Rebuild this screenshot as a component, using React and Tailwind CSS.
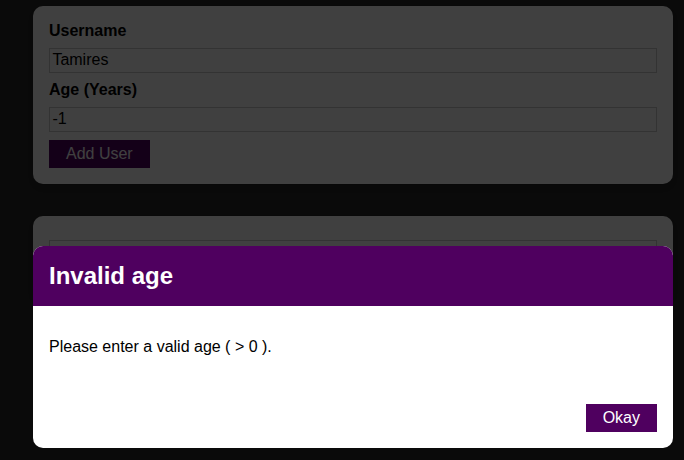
import { useState } from "react";

export default function App() {
  const [name, setName] = useState("Tamires");
  const [age, setAge] = useState("-1");
  const [error, setError] = useState({
    title: "Invalid age",
    message: "Please enter a valid age ( > 0 ).",
  });

  return (
    <div className="relative h-[460px] overflow-hidden bg-[#282828] font-['Liberation_Sans',Arial,sans-serif] text-base text-black">
      {/* add user form */}
      <div className="ml-[33px] mt-[6px] w-[640px] rounded-[10px] bg-white p-4 shadow-md">
        <label className="mb-2 block font-bold leading-[18px]">Username</label>
        <input
          className="mb-2 block w-full border border-[#ccc] p-[0.15rem] leading-[18px] outline-none"
          value={name}
          onChange={(e) => setName(e.target.value)}
        />
        <label className="mb-2 block font-bold leading-[18px]">Age (Years)</label>
        <input
          className="mb-2 block w-full border border-[#ccc] p-[0.15rem] leading-[18px] outline-none"
          value={age}
          onChange={(e) => setAge(e.target.value)}
        />
        <button className="border border-[#4f005f] bg-[#4f005f] px-4 py-1 leading-[18px] text-white">
          Add User
        </button>
      </div>

      {/* users list (covered by the modal) */}
      <div className="ml-[33px] mt-8 w-[640px] rounded-[10px] bg-white shadow-md">
        <ul className="p-4">
          <li className="my-2 h-[36px] border border-[#ccc] p-2" />
        </ul>
      </div>

      {error && (
        <>
          <div className="absolute inset-0 bg-black/75" onClick={() => setError(null)} />
          <div className="absolute left-[33px] top-[246px] w-[640px] overflow-hidden rounded-[10px] bg-white">
            <header className="bg-[#4f005f] p-4">
              <h2 className="text-2xl font-bold leading-[28px] text-white">{error.title}</h2>
            </header>
            <div className="p-4">
              <p className="my-4 leading-[18px]">{error.message}</p>
            </div>
            <footer className="flex justify-end p-4">
              <button
                className="border border-[#4f005f] bg-[#4f005f] px-4 py-1 leading-[18px] text-white"
                onClick={() => setError(null)}
              >
                Okay
              </button>
            </footer>
          </div>
        </>
      )}
    </div>
  );
}
